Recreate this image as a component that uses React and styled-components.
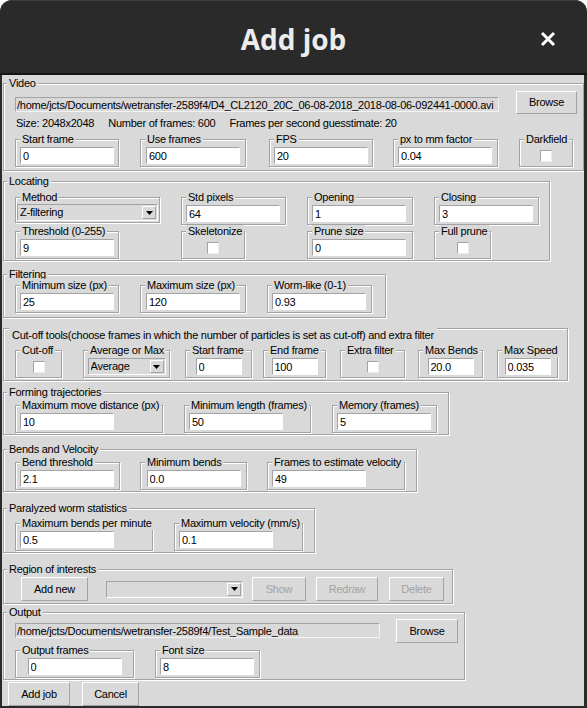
import React from "react";
import styled, { createGlobalStyle } from "styled-components";

const GlobalStyle = createGlobalStyle`
  html, body {
    margin: 0;
    padding: 0;
    background: #ffffff;
  }
  body {
    font-family: "Liberation Sans", Arial, sans-serif;
  }
`;

const Window = styled.div`
  width: 587px;
  height: 708px;
  box-sizing: border-box;
  display: flex;
  flex-direction: column;
  background: #2a2a2a;
  border-radius: 12px 12px 0 0;
  box-shadow: inset 0 1px 0 #3e3e3e;
  overflow: hidden;
`;

const TitleBar = styled.div`
  flex: none;
  box-sizing: border-box;
  height: 75px;
  padding-top: 5px;
  border-bottom: 2px solid #141414;
  display: grid;
  grid-template-columns: 1fr auto 1fr;
  align-items: center;
`;

const Title = styled.div`
  font-family: "Open Sans", "Noto Sans", sans-serif;
  font-weight: 700;
  font-size: 28px;
  color: #ececec;
`;

const Close = styled.div`
  justify-self: end;
  margin-right: 31px;
  display: flex;
  svg {
    display: block;
  }
`;

const Body = styled.div`
  flex: 1;
  margin: 0 3px 2px 2px;
  background: #d9d9d9;
  display: flex;
  flex-direction: column;
  align-items: flex-start;
  overflow: hidden;
  color: #000;
  font-size: 11px;
  line-height: 13px;
  letter-spacing: -0.25px;
`;

// Tk labelframe with groove relief
const Frame = styled.div`
  box-sizing: border-box;
  flex: none;
  width: ${(p) => p.$w}px;
  margin: ${(p) => p.$mt}px 0 0 1px;
  padding: 0 0 ${(p) => p.$pb}px 3px;
  border: 1px solid #a3a3a3;
  box-shadow: inset 1px 1px 0 #fff, 1px 1px 0 #fff;
  display: flex;
  flex-direction: column;
  align-items: flex-start;
`;

const Field = styled.div`
  box-sizing: border-box;
  flex: none;
  width: ${(p) => p.$w}px;
  margin-left: ${(p) => p.$ml || 0}px;
  padding: 0 4px ${(p) => (p.$pb === undefined ? 2 : p.$pb)}px 4px;
  border: 1px solid #a3a3a3;
  box-shadow: inset 1px 1px 0 #fff, 1px 1px 0 #fff;
  display: flex;
  flex-direction: column;
  align-items: ${(p) => (p.$center ? "center" : "flex-start")};
`;

const Legend = styled.div`
  flex: none;
  align-self: flex-start;
  margin: ${(p) => (p.$flat ? "-1px 0 0 2px" : "-7px 0 0 0")};
  padding: ${(p) => (p.$flat ? "0 3px" : "0 2px")};
  height: ${(p) => (p.$flat ? 14 : 13)}px;
  line-height: ${(p) => (p.$flat ? 14 : 13)}px;
  background: #d9d9d9;
  white-space: nowrap;
`;

const Row = styled.div`
  display: flex;
  align-items: ${(p) => p.$align || "flex-start"};
  margin: ${(p) => p.$mt || 0}px 0 0 ${(p) => (p.$ml === undefined ? 8 : p.$ml)}px;
`;

const FieldGrid = styled.div`
  display: grid;
  grid-template-columns: 145px 105px 106px 105px;
  column-gap: 21px;
  row-gap: 6px;
  justify-items: start;
  align-items: start;
  margin: 9px 0 0 8px;
`;

const Info = styled.div`
  display: flex;
  gap: 14px;
  margin: 3px 0 0 9px;
  height: 13px;
  white-space: nowrap;
`;

const Entry = styled.input`
  box-sizing: border-box;
  flex: none;
  width: ${(p) => p.$w || 94}px;
  height: 17px;
  margin: 1px 0 0;
  padding: 0 2px;
  border: 1px solid;
  border-color: #a3a3a3 #ffffff #ffffff #a3a3a3;
  border-radius: 0;
  background: #ffffff;
  color: #000;
  font: inherit;
  letter-spacing: inherit;
  outline: none;
`;

const PathEntry = styled(Entry)`
  height: 15px;
  margin-top: ${(p) => p.$mt}px;
  padding: 0 1px;
  background: #d9d9d9;
  border-color: #a3a3a3 #f4f4f4 #f4f4f4 #a3a3a3;
`;

const Check = styled.span`
  display: block;
  box-sizing: border-box;
  width: 12px;
  height: 12px;
  margin: 4px 0 2px;
  background: #ffffff;
  border: 1px solid;
  border-color: #a3a3a3 #ececec #ececec #a3a3a3;
`;

const Combo = styled.div`
  box-sizing: border-box;
  flex: none;
  width: ${(p) => p.$w}px;
  height: 17px;
  margin: ${(p) => p.$mt || 0}px 0 0 ${(p) => p.$ml || 0}px;
  display: flex;
  align-items: center;
  padding-left: 2px;
  background: #d9d9d9;
  border: 1px solid;
  border-color: #a3a3a3 #ffffff #ffffff #a3a3a3;
  white-space: nowrap;
`;

const ComboText = styled.span`
  flex: 1;
  overflow: hidden;
`;

const ComboArrow = styled.span`
  box-sizing: border-box;
  flex: none;
  width: 14px;
  height: 13px;
  margin-right: 1px;
  display: flex;
  align-items: center;
  justify-content: center;
  border: 1px solid;
  border-color: #ffffff #a3a3a3 #a3a3a3 #ffffff;
  svg {
    display: block;
  }
`;

const Button = styled.button`
  box-sizing: border-box;
  flex: none;
  width: ${(p) => p.$w}px;
  height: ${(p) => p.$h || 24}px;
  margin-left: ${(p) => p.$ml || 0}px;
  padding: 0;
  background: #d9d9d9;
  border: 1px solid;
  border-color: #ffffff #a3a3a3 #a3a3a3 #ffffff;
  border-radius: 0;
  color: #000;
  font: inherit;
  letter-spacing: inherit;

  &:disabled {
    color: #a3a3a3;
  }
`;

const Footer = styled.div`
  display: flex;
  margin: 2px 0 0 6px;
`;

const TextField = ({ label, value, w, ml, center, ew }) => (
  <Field $w={w} $ml={ml} $center={center}>
    <Legend>{label}</Legend>
    <Entry $w={ew} defaultValue={value} />
  </Field>
);

const CheckField = ({ label, w, ml }) => (
  <Field $w={w} $ml={ml} $center>
    <Legend>{label}</Legend>
    <Check />
  </Field>
);

const Arrow = () => (
  <ComboArrow>
    <svg width="7" height="4" viewBox="0 0 7 4">
      <path d="M0 0h7L3.5 4z" fill="#000" />
    </svg>
  </ComboArrow>
);

const App = () => {
  return (
    <>
      <GlobalStyle />
      <Window>
        <TitleBar>
          <span />
          <Title>Add job</Title>
          <Close>
            <svg width="16" height="16" viewBox="0 0 16 16">
              <path d="M2 2L14 14M14 2L2 14" stroke="#ffffff" strokeWidth="3" />
            </svg>
          </Close>
        </TitleBar>
        <Body>
          <Frame $w={581} $mt={8} $pb={3}>
            <Legend>Video</Legend>
            <Row $mt={1}>
              <PathEntry
                $w={484}
                $mt={6}
                readOnly
                value="/home/jcts/Documents/wetransfer-2589f4/D4_CL2120_20C_06-08-2018_2018-08-06-092441-0000.avi"
              />
              <Button $w={61} $h={23} $ml={17}>Browse</Button>
            </Row>
            <Info>
              <span>Size: 2048x2048</span>
              <span>Number of frames: 600</span>
              <span>Frames per second guesstimate: 20</span>
            </Info>
            <Row $mt={9}>
              <TextField label="Start frame" value="0" w={104} />
              <TextField label="Use frames" value="600" w={106} ml={21} center />
              <TextField label="FPS" value="20" w={104} ml={23} />
              <TextField label="px to mm factor" value="0.04" w={105} ml={20} />
              <CheckField label="Darkfield" w={54} ml={21} />
            </Row>
          </Frame>

          <Frame $w={547} $mt={10} $pb={1}>
            <Legend>Locating</Legend>
            <FieldGrid>
              <Field $w={145} $pb={1} $center>
                <Legend>Method</Legend>
                <Combo $w={141}>
                  <ComboText>Z-filtering</ComboText>
                  <Arrow />
                </Combo>
              </Field>
              <TextField label="Std pixels" value="64" w={105} />
              <TextField label="Opening" value="1" w={106} />
              <TextField label="Closing" value="3" w={105} />
              <TextField label="Threshold (0-255)" value="9" w={104} />
              <CheckField label="Skeletonize" w={64} />
              <TextField label="Prune size" value="0" w={106} />
              <CheckField label="Full prune" w={57} />
            </FieldGrid>
          </Frame>

          <Frame $w={383} $mt={13} $pb={4}>
            <Legend>Filtering</Legend>
            <Row $mt={4}>
              <TextField label="Minimum size (px)" value="25" w={104} />
              <TextField label="Maximum size (px)" value="120" w={106} ml={21} center />
              <TextField label="Worm-like (0-1)" value="0.93" w={105} ml={21} />
            </Row>
          </Frame>

          <Frame $w={565} $mt={10} $pb={2}>
            <Legend $flat>
              Cut-off tools(choose frames in which the number of particles is set as cut-off) and extra filter
            </Legend>
            <Row $mt={8}>
              <CheckField label="Cut-off" w={47} />
              <Field $w={87} $ml={21} $pb={2} $center>
                <Legend>Average or Max</Legend>
                <Combo $w={78} $mt={1}>
                  <ComboText>Average</ComboText>
                  <Arrow />
                </Combo>
              </Field>
              <TextField label="Start frame" value="0" w={67} ml={15} ew={46} center />
              <TextField label="End frame" value="100" w={63} ml={11} ew={46} center />
              <CheckField label="Extra filter" w={65} ml={14} />
              <TextField label="Max Bends" value="20.0" w={65} ml={13} ew={46} center />
              <TextField label="Max Speed" value="0.035" w={61} ml={14} ew={46} center />
            </Row>
          </Frame>

          <Frame $w={446} $mt={11} $pb={1}>
            <Legend>Forming trajectories</Legend>
            <Row $mt={6}>
              <TextField label="Maximum move distance (px)" value="10" w={148} />
              <TextField label="Minimum length (frames)" value="50" w={127} ml={21} />
              <TextField label="Memory (frames)" value="5" w={105} ml={21} />
            </Row>
          </Frame>

          <Frame $w={414} $mt={14} $pb={1}>
            <Legend>Bends and Velocity</Legend>
            <Row $mt={6}>
              <TextField label="Bend threshold" value="2.1" w={105} />
              <TextField label="Minimum bends" value="0.0" w={107} ml={20} center />
              <TextField label="Frames to estimate velocity" value="49" w={138} ml={20} />
            </Row>
          </Frame>

          <Frame $w={312} $mt={16} $pb={1}>
            <Legend>Paralyzed worm statistics</Legend>
            <Row $mt={8}>
              <TextField label="Maximum bends per minute" value="0.5" w={138} />
              <TextField label="Maximum velocity (mm/s)" value="0.1" w={129} ml={21} />
            </Row>
          </Frame>

          <Frame $w={450} $mt={16} $pb={2}>
            <Legend>Region of interests</Legend>
            <Row $mt={1} $ml={14} $align="center">
              <Button $w={67}>Add new</Button>
              <Combo $w={137} $ml={18}>
                <ComboText />
                <Arrow />
              </Combo>
              <Button $w={54} $ml={9} disabled>Show</Button>
              <Button $w={62} $ml={10} disabled>Redraw</Button>
              <Button $w={55} $ml={11} disabled>Delete</Button>
            </Row>
          </Frame>

          <Frame $w={462} $mt={8} $pb={1}>
            <Legend>Output</Legend>
            <Row>
              <PathEntry
                $w={365}
                $mt={4}
                readOnly
                value="/home/jcts/Documents/wetransfer-2589f4/Test_Sample_data"
              />
              <Button $w={62} $ml={16}>Browse</Button>
            </Row>
            <Row $mt={7}>
              <TextField label="Output frames" value="0" w={119} center />
              <TextField label="Font size" value="8" w={105} ml={21} />
            </Row>
          </Frame>

          <Footer>
            <Button $w={62}>Add job</Button>
            <Button $w={57} $ml={12}>Cancel</Button>
          </Footer>
        </Body>
      </Window>
    </>
  );
};

export default App;
